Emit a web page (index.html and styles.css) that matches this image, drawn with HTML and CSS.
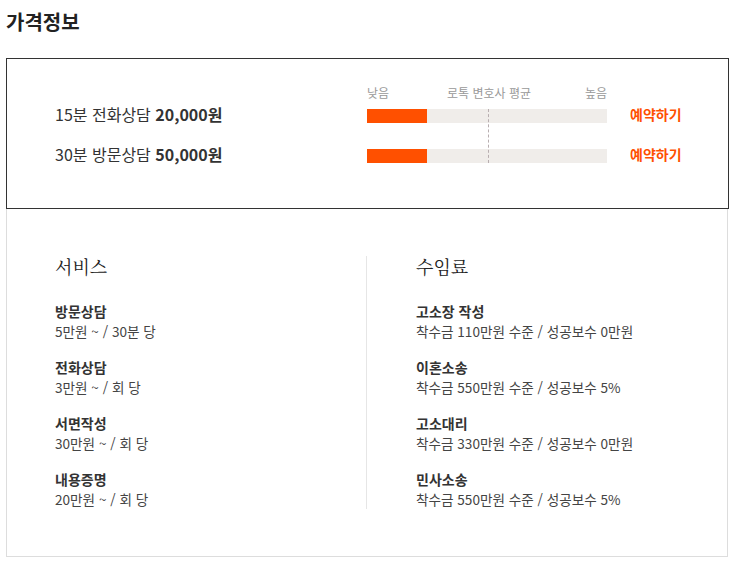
FILE: index.html
```html
<!DOCTYPE html>
<html lang="ko">
<head>
<meta charset="utf-8">
<title>가격정보</title>
<link rel="stylesheet" href="styles.css">
</head>
<body>
<div class="page">
  <h2 class="title">가격정보</h2>

  <section class="price-box">
    <div class="col-names">
      <div class="row"><span>15분 전화상담 <b>20,000원</b></span></div>
      <div class="row"><span>30분 방문상담 <b>50,000원</b></span></div>
    </div>
    <div class="col-bars">
      <div class="scale">
        <span>낮음</span><span>로톡 변호사 평균</span><span>높음</span>
      </div>
      <div class="bars">
        <div class="row"><div class="bar"><div class="fill" style="width:60px"></div></div></div>
        <div class="row"><div class="bar"><div class="fill" style="width:60px"></div></div></div>
        <div class="avg"></div>
      </div>
    </div>
    <div class="col-actions">
      <div class="row"><a class="reserve">예약하기</a></div>
      <div class="row"><a class="reserve">예약하기</a></div>
    </div>
  </section>

  <section class="detail-box">
    <div class="detail-col left">
      <h3 class="detail-head">서비스</h3>
      <div class="item"><div class="item-title">방문상담</div><div class="item-desc">5만원 ~ / 30분 당</div></div>
      <div class="item"><div class="item-title">전화상담</div><div class="item-desc">3만원 ~ / 회 당</div></div>
      <div class="item"><div class="item-title">서면작성</div><div class="item-desc">30만원 ~ / 회 당</div></div>
      <div class="item"><div class="item-title">내용증명</div><div class="item-desc">20만원 ~ / 회 당</div></div>
    </div>
    <div class="detail-col right">
      <h3 class="detail-head">수임료</h3>
      <div class="item"><div class="item-title">고소장 작성</div><div class="item-desc">착수금 110만원 수준 / 성공보수 0만원</div></div>
      <div class="item"><div class="item-title">이혼소송</div><div class="item-desc">착수금 550만원 수준 / 성공보수 5%</div></div>
      <div class="item"><div class="item-title">고소대리</div><div class="item-desc">착수금 330만원 수준 / 성공보수 0만원</div></div>
      <div class="item"><div class="item-title">민사소송</div><div class="item-desc">착수금 550만원 수준 / 성공보수 5%</div></div>
    </div>
  </section>
</div>
</body>
</html>
```

FILE: styles.css
```css
* { box-sizing: border-box; }
body {
  margin: 0;
  background: #fff;
  font-family: "Noto Sans CJK KR", "Noto Sans", sans-serif;
  color: #333;
}
.page {
  width: 723px;
  margin-left: 6px;
}
.title {
  margin: 0;
  padding-top: 8px;
  height: 58px;
  font-size: 20px;
  line-height: 28px;
  font-weight: 700;
  color: #222;
}
.price-box {
  display: flex;
  border: 1px solid #333;
  padding: 26px 0 40px 48px;
}
.row {
  height: 24px;
  display: flex;
  align-items: center;
}
.row + .row { margin-top: 16px; }
.col-names {
  width: 312px;
  padding-top: 17px;
  font-size: 16px;
  color: #333;
}
.col-names b { font-weight: 700; }
.col-bars { width: 240px; }
.scale {
  display: flex;
  justify-content: space-between;
  height: 16px;
  line-height: 16px;
  font-size: 12px;
  color: #999;
  margin-bottom: 3px;
}
.scale span:nth-child(2) { margin-left: 4px; }
.bars { position: relative; }
.bar {
  width: 240px;
  height: 14px;
  background: #f0edea;
}
.fill {
  height: 100%;
  background: #ff5000;
}
.avg {
  position: absolute;
  left: 121px;
  top: 5px;
  bottom: 5px;
  border-left: 1px dashed #b8aeb0;
}
.col-actions {
  padding-top: 17px;
  margin-left: 23px;
}
.reserve {
  font-size: 14px;
  font-weight: 700;
  color: #ff5000;
  cursor: pointer;
}
.detail-box {
  display: flex;
  border: 1px solid #ddd;
  border-top: none;
  width: 722px;
  padding: 47px 0 47px 48px;
}
.detail-col.left {
  width: 312px;
  border-right: 1px solid #e6e6e6;
}
.detail-col.right {
  padding-left: 49px;
}
.detail-head {
  margin: 0 0 25px;
  font-family: "Noto Serif CJK KR", serif;
  font-size: 18px;
  line-height: 20px;
  font-weight: 400;
  color: #222;
}
.item + .item { margin-top: 16px; }
.item-title {
  font-size: 14px;
  line-height: 20px;
  font-weight: 700;
  color: #333;
}
.item-desc {
  font-size: 13.6px;
  line-height: 20px;
  color: #444;
}
```
